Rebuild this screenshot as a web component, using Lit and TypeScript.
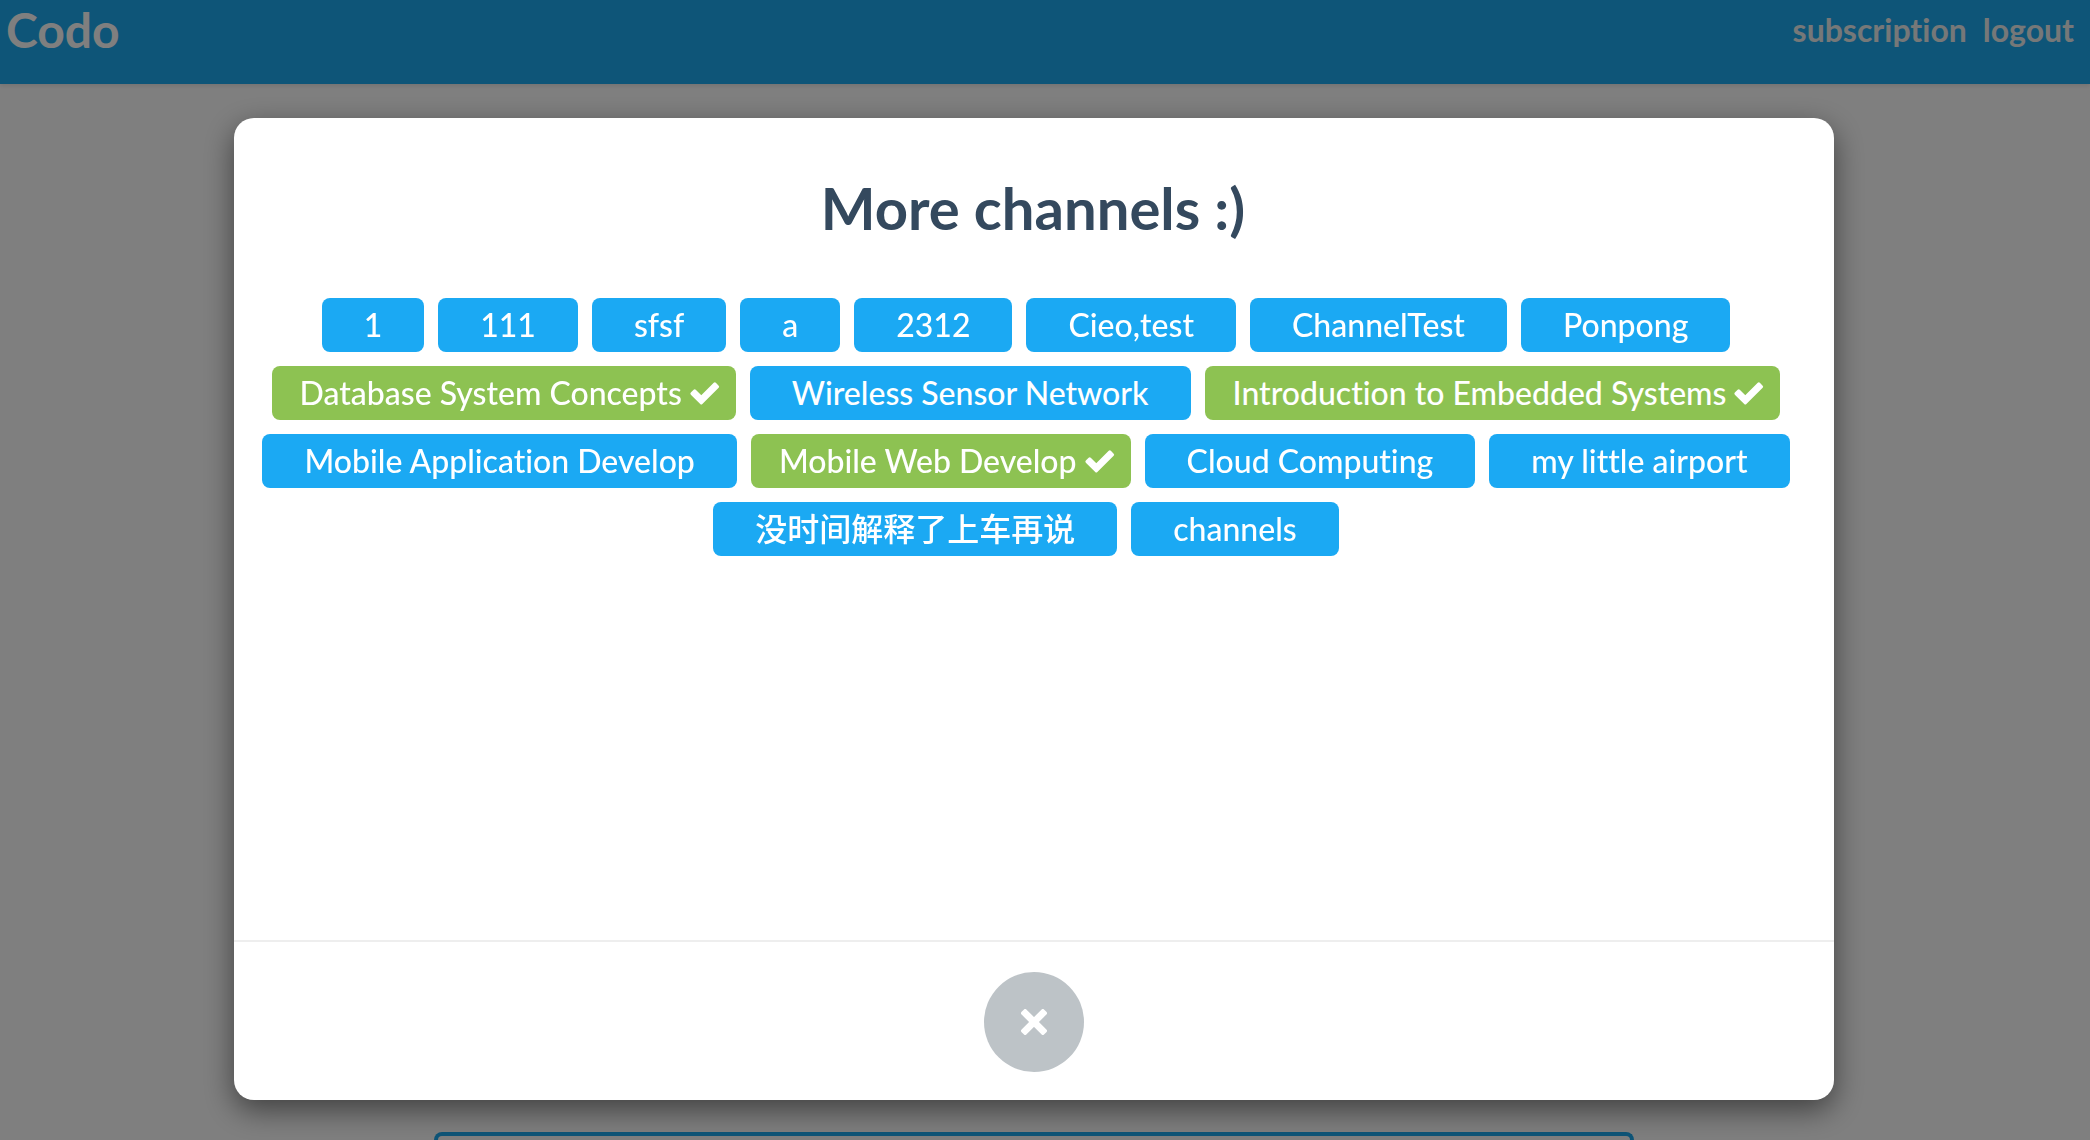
import { LitElement, html, css, svg } from "lit";
import { customElement, property, state } from "lit/decorators.js";
import { classMap } from "lit/directives/class-map.js";

interface Channel {
  name: string;
  joined: boolean;
}

const channel = (name: string, joined = false): Channel => ({ name, joined });

const CHANNELS: Channel[] = [
  channel("1"),
  channel("111"),
  channel("sfsf"),
  channel("a"),
  channel("2312"),
  channel("Cieo,test"),
  channel("ChannelTest"),
  channel("Ponpong"),
  channel("Database System Concepts", true),
  channel("Wireless Sensor Network"),
  channel("Introduction to Embedded Systems", true),
  channel("Mobile Application Develop"),
  channel("Mobile Web Develop", true),
  channel("Cloud Computing"),
  channel("my little airport"),
  channel("没时间解释了上车再说"),
  channel("channels"),
];

const checkShape = svg`<path d="M1.9 11.6 4.7 8.8 11.3 15.4 24.8 1.9 27.6 4.7 11.3 21Z" stroke="currentColor" stroke-width="3" stroke-linejoin="round"/>`;
const crossShape = svg`<g transform="rotate(45 13 13)">
  <rect x="-3" y="9.5" width="32" height="7" rx="2"/>
  <rect x="9.5" y="-3" width="7" height="32" rx="2"/>
</g>`;

@customElement("channel-chip")
export class ChannelChip extends LitElement {
  @property() name = "";
  @property({ type: Boolean }) joined = false;

  static styles = css`
    :host {
      display: block;
    }
    .chip {
      display: flex;
      align-items: center;
      gap: 8px;
      height: 54px;
      padding: 0 42px;
      border: 0;
      border-radius: 8px;
      background: #1ba9f3;
      color: #fff;
      font: 500 32px/54px Lato, "Noto Sans CJK SC", sans-serif;
      font-variant-ligatures: none;
      white-space: nowrap;
      cursor: pointer;
    }
    .joined {
      padding: 0 16px 0 28px;
      background: #8dc252;
    }
    .check {
      width: 30px;
      height: 22px;
      fill: currentColor;
    }
  `;

  render() {
    return html`<button
      type="button"
      class=${classMap({ chip: true, joined: this.joined })}
      aria-pressed=${this.joined ? "true" : "false"}
    >
      <span>${this.name}</span>
      ${this.joined
        ? html`<svg class="check" viewBox="0 0 30 22" overflow="visible" aria-hidden="true">${checkShape}</svg>`
        : null}
    </button>`;
  }
}

@customElement("app-root")
export class AppRoot extends LitElement {
  @state() private channels = CHANNELS;
  @state() private open = true;

  static styles = css`
    :host {
      display: block;
      font-family: Lato, "Noto Sans CJK SC", sans-serif;
      font-variant-ligatures: none;
    }
    .page {
      display: flex;
      flex-direction: column;
      height: 100vh;
      overflow: hidden;
      background: #fff;
    }
    .topbar {
      display: flex;
      justify-content: space-between;
      height: 84px;
      padding: 0 16px 0 6px;
      background: #1caaf0;
      box-shadow: 0 2px 4px rgba(0, 0, 0, 0.1);
      color: #fff;
      font-weight: 700;
    }
    .brand {
      font-size: 48px;
      line-height: 60px;
      color: inherit;
      text-decoration: none;
    }
    .links {
      display: flex;
      gap: 16px;
      font-size: 32px;
      line-height: 60px;
    }
    .links a {
      color: #ecf0f1;
      text-decoration: none;
    }
    .main {
      flex: 1;
      display: flex;
      align-items: flex-end;
      justify-content: center;
      padding-right: 22px;
    }
    .panel {
      width: 100%;
      max-width: 1200px;
      height: 8px;
      box-sizing: border-box;
      border: 4px solid #1caaf0;
      border-bottom: 0;
      border-radius: 8px 8px 0 0;
    }
    .backdrop {
      position: fixed;
      inset: 0;
      display: flex;
      justify-content: center;
      padding: 118px 22px 40px 0;
      background: rgba(0, 0, 0, 0.5);
    }
    .modal {
      display: flex;
      flex-direction: column;
      width: 100%;
      max-width: 1600px;
      border-radius: 20px;
      background: #fff;
      box-shadow: 0 10px 30px rgba(0, 0, 0, 0.5);
    }
    .body {
      flex: 1;
      padding: 54px 36px 0 20px;
    }
    .title {
      margin: 0 0 54px;
      padding-left: 14px;
      color: #34495e;
      font-size: 58px;
      line-height: 72px;
      font-weight: 700;
      text-align: center;
    }
    .channels {
      display: flex;
      flex-wrap: wrap;
      justify-content: center;
      gap: 14px;
      margin: 0;
      padding: 0;
      list-style: none;
    }
    .footer {
      display: flex;
      justify-content: center;
      padding: 30px 0 28px;
      border-top: 2px solid #eee;
    }
    .close {
      display: grid;
      place-items: center;
      width: 100px;
      height: 100px;
      padding: 0;
      border: 0;
      border-radius: 50%;
      background: #bdc3c7;
      color: #fff;
      cursor: pointer;
    }
    .cross {
      width: 26px;
      height: 26px;
      fill: currentColor;
    }
  `;

  render() {
    return html`
      <div class="page">
        <header class="topbar">
          <a class="brand" href="#">Codo</a>
          <nav class="links">
            <a href="#subscription">subscription</a>
            <a href="#logout">logout</a>
          </nav>
        </header>
        <main class="main"><section class="panel"></section></main>
      </div>
      ${this.open ? this.renderDialog() : null}
    `;
  }

  private renderDialog() {
    return html`<div class="backdrop">
      <div class="modal" role="dialog" aria-modal="true" aria-labelledby="title">
        <div class="body">
          <h1 class="title" id="title">More channels :)</h1>
          <ul class="channels">
            ${this.channels.map(
              (c) => html`<li><channel-chip .name=${c.name} .joined=${c.joined}></channel-chip></li>`
            )}
          </ul>
        </div>
        <div class="footer">
          <button class="close" type="button" aria-label="Close" @click=${() => (this.open = false)}>
            <svg class="cross" viewBox="0 0 26 26" aria-hidden="true">${crossShape}</svg>
          </button>
        </div>
      </div>
    </div>`;
  }
}
